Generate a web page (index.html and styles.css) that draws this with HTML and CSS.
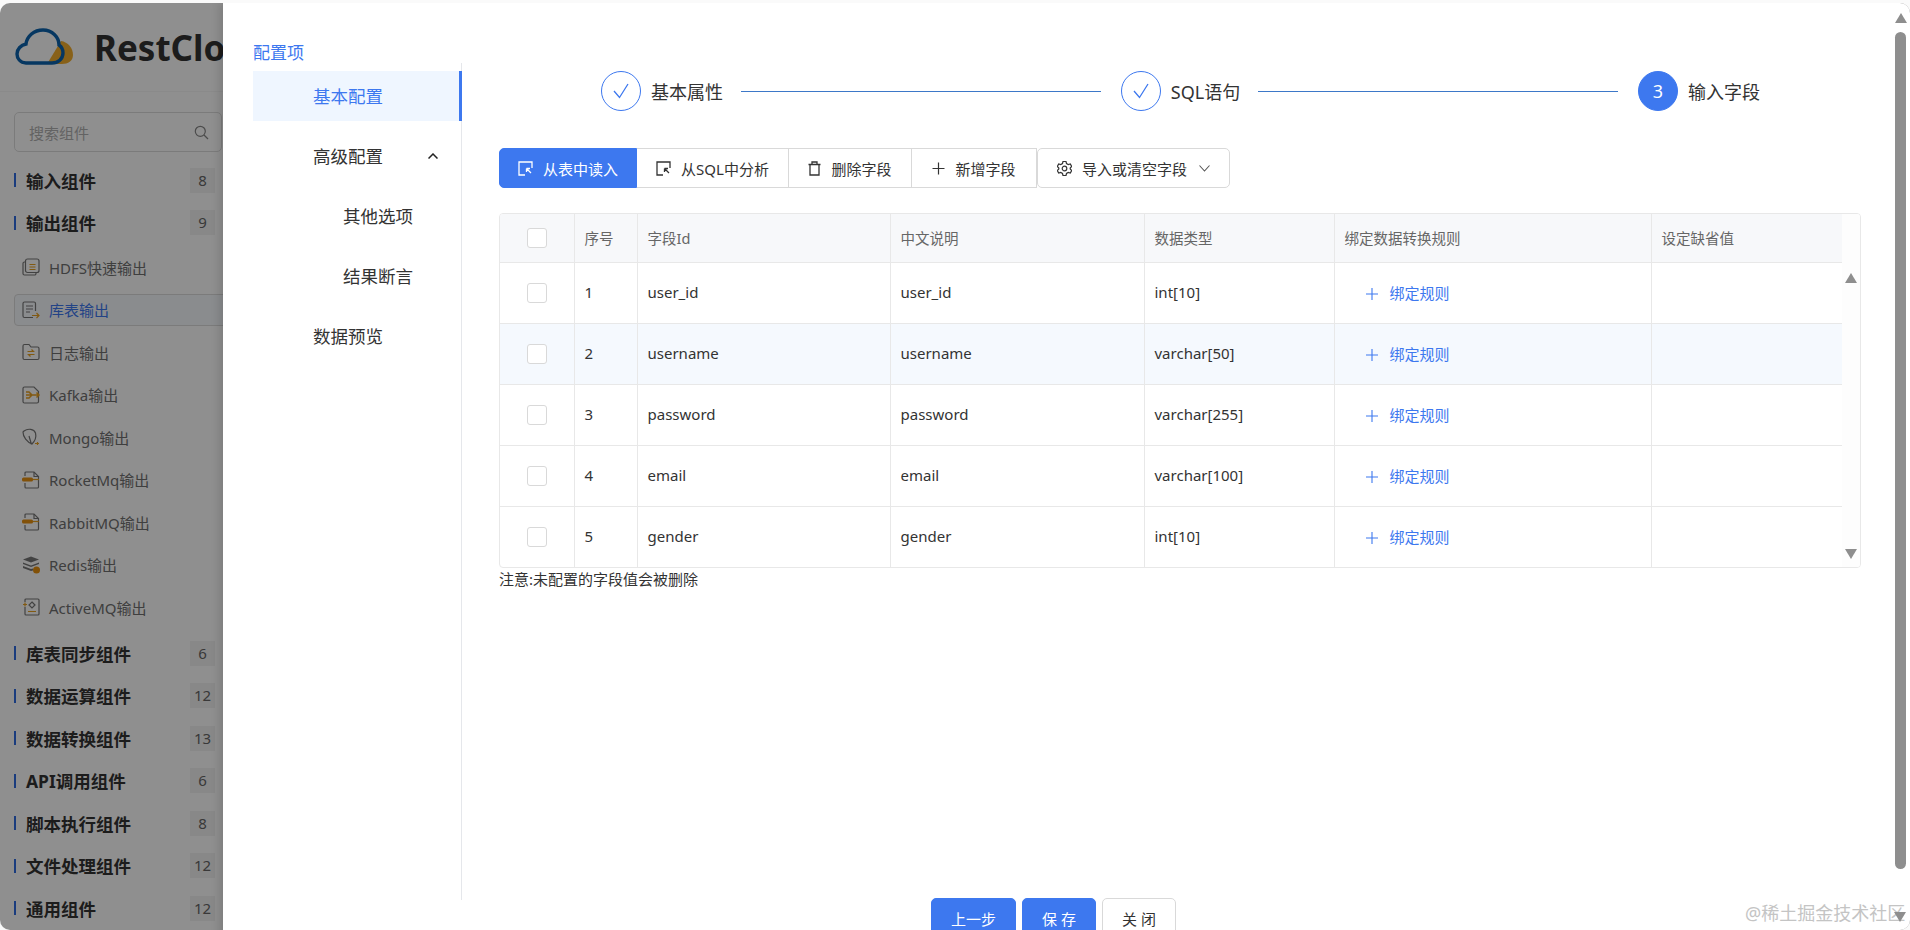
FILE: index.html
```html
<!DOCTYPE html>
<html lang="en">
<head>
    <meta charset="UTF-8">
    <meta name="viewport" content="width=device-width, initial-scale=1.0">
    <title>RestCloud</title>
    <link rel="stylesheet" href="styles.css">
</head>
<body>

<div class="page">
    <div class="sidebar">
        <div class="logo">
            <svg class="logo-icon" width="58" height="38" viewBox="0 0 58 38">
                <path d="M32 36 L46 13 C53 14 58 20 58 27 C58 33 53 36 47 36 Z" fill="#f2ae2e"/>
                <path d="M11 35 C5 35 2 30 2 26 C2 21 6 17 11 16 C12 8 19 2 28 2 C37 2 44 9 44 17 C47 19 48 22 48 25 C48 31 43 35 37 35 Z" fill="none" stroke="#0b62ad" stroke-width="3.4"/>
            </svg>
            <span class="logo-text">RestCloud</span>
        </div>

        <div class="search">
            <span>搜索组件</span>
            <svg width="15" height="15" viewBox="0 0 15 15" fill="none" stroke="#888" stroke-width="1.2"><circle cx="6.3" cy="6.3" r="5"/><path d="M10 10l4 4"/></svg>
        </div>

        <div class="group"><span class="group-name">输入组件</span><span class="count">8</span></div>
        <div class="group"><span class="group-name">输出组件</span><span class="count">9</span></div>

        <div class="items">
            <div class="item">
                <svg width="18" height="18" viewBox="0 0 18 18" fill="none" stroke="#777" stroke-width="1.2"><rect x="3.5" y="1" width="13.5" height="13.5" rx="2"/><path d="M3.5 4H2.5A1.5 1.5 0 0 0 1 5.500V15.500A1.500 1.500 0 0 0 2.500 17H12.500A1.500 1.500 0 0 0 14 15.500V14.500"/><path d="M7.500 6.500h6M7.500 9h6M7.500 11.500h6" stroke="#e8a020"/></svg>
                <span>HDFS快速输出</span>
            </div>
            <div class="item item-active">
                <svg width="18" height="18" viewBox="0 0 18 18" fill="none" stroke="#777" stroke-width="1.2"><path d="M11 16.500H2.500A1.500 1.500 0 0 1 1 15V2.500A1.500 1.500 0 0 1 2.500 1H12A1.500 1.500 0 0 1 13.500 2.500V10"/><path d="M4 5h7M4 8h7M4 11h4"/><path d="M10 14.500h7M14.500 12l2.500 2.500-2.500 2.500" stroke="#e8a020"/></svg>
                <span>库表输出</span>
            </div>
            <div class="item">
                <svg width="18" height="18" viewBox="0 0 18 18" fill="none" stroke="#777" stroke-width="1.2"><path d="M1 3A1.500 1.500 0 0 1 2.500 1.500H7L9 4H15.500A1.500 1.500 0 0 1 17 5.500V15A1.500 1.500 0 0 1 15.500 16.500H2.500A1.500 1.500 0 0 1 1 15Z"/><path d="M5.500 8.500h6l-2-2M12.500 11.500h-6l2 2" stroke="#e8a020"/></svg>
                <span>日志输出</span>
            </div>
            <div class="item">
                <svg width="18" height="18" viewBox="0 0 18 18" fill="none" stroke="#777" stroke-width="1.2"><path d="M1 2.500A1.500 1.500 0 0 1 2.500 1H12L16.500 5.500V15.500A1.500 1.500 0 0 1 15 17H2.500A1.500 1.500 0 0 1 1 15.500Z"/><path d="M4 6h3l3 3-3 3H4M4 9h13M14.500 6.500L17 9l-2.500 2.500" stroke="#e8a020" stroke-width="1.500"/></svg>
                <span>Kafka输出</span>
            </div>
            <div class="item">
                <svg width="18" height="18" viewBox="0 0 18 18" fill="none" stroke="#777" stroke-width="1.2"><path d="M2 3C6 0 12 1 13.500 5C14.500 9 13 13 10 16C5 14 1 9 1 4ZM9.500 16.500L7 8"/><path d="M13 15.500h4M15.500 14v3" stroke="#e8a020"/></svg>
                <span>Mongo输出</span>
            </div>
            <div class="item">
                <svg width="18" height="18" viewBox="0 0 18 18" fill="none" stroke="#777" stroke-width="1.2"><path d="M3 5V2A1 1 0 0 1 4 1H12L16.500 5.500V16A1 1 0 0 1 15.500 17H4A1 1 0 0 1 3 16V12"/><path d="M12 1V5.500H16.500"/><rect x="0" y="6.500" width="11" height="4" rx="1.500" fill="#e8900f" stroke="none"/><path d="M11 8.500h6" stroke="#e8a020"/></svg>
                <span>RocketMq输出</span>
            </div>
            <div class="item">
                <svg width="18" height="18" viewBox="0 0 18 18" fill="none" stroke="#777" stroke-width="1.2"><path d="M3 5V2A1 1 0 0 1 4 1H12L16.500 5.500V16A1 1 0 0 1 15.500 17H4A1 1 0 0 1 3 16V12"/><path d="M12 1V5.500H16.500"/><rect x="0" y="6.500" width="11" height="4" rx="1.500" fill="#e8900f" stroke="none"/><path d="M11 8.500h6" stroke="#e8a020"/></svg>
                <span>RabbitMQ输出</span>
            </div>
            <div class="item">
                <svg width="18" height="18" viewBox="0 0 18 18" fill="#777" stroke="none"><path d="M9 0.500L17 3.500 9 6.500 1 3.500Z"/><path d="M1 6.500L9 9.500 17 6.500V8L9 11 1 8Z"/><path d="M1 10L9 13 11 12.500V14.500L9 15 1 12Z"/><circle cx="14.500" cy="14" r="3.500" fill="#e8900f"/></svg>
                <span>Redis输出</span>
            </div>
            <div class="item">
                <svg width="18" height="18" viewBox="0 0 18 18" fill="none" stroke="#777" stroke-width="1.2"><path d="M3 4V2A1 1 0 0 1 4 1H16A1 1 0 0 1 17 2V16A1 1 0 0 1 16 17H4A1 1 0 0 1 3 16V9"/><path d="M10 4L13 7 10 10 7 7Z"/><path d="M6 13.500h8M1 6.500h4M3 4.500v4" stroke="#e8a020"/></svg>
                <span>ActiveMQ输出</span>
            </div>
        </div>

        <div class="group"><span class="group-name">库表同步组件</span><span class="count">6</span></div>
        <div class="group"><span class="group-name">数据运算组件</span><span class="count">12</span></div>
        <div class="group"><span class="group-name">数据转换组件</span><span class="count">13</span></div>
        <div class="group"><span class="group-name">API调用组件</span><span class="count">6</span></div>
        <div class="group"><span class="group-name">脚本执行组件</span><span class="count">8</span></div>
        <div class="group"><span class="group-name">文件处理组件</span><span class="count">12</span></div>
        <div class="group"><span class="group-name">通用组件</span><span class="count">12</span></div>
    </div>
    <div class="mask"></div>

    <div class="drawer">
        <div class="drawer-body">
            <div class="side">
                <div class="side-title">配置项</div>
                <ul class="menu">
                    <li class="menu-item active">基本配置</li>
                    <li class="menu-item">高级配置
                        <svg class="chevron-up" width="10" height="6" viewBox="0 0 10 6" fill="none" stroke="#222" stroke-width="1.500"><path d="M0.500 5.500L5 1l4.500 4.500"/></svg>
                    </li>
                    <li class="menu-item sub">其他选项</li>
                    <li class="menu-item sub">结果断言</li>
                    <li class="menu-item">数据预览</li>
                </ul>
            </div>

            <div class="main">
                <div class="steps">
                    <span class="circle">
                        <svg width="38" height="38" viewBox="0 0 38 38" fill="none" stroke="#3d78ef" stroke-width="1.300"><path d="M12 19l5.500 6.500L26 12"/></svg>
                    </span>
                    <span class="step-label">基本属性</span>
                    <span class="step-line"></span>
                    <span class="circle">
                        <svg width="38" height="38" viewBox="0 0 38 38" fill="none" stroke="#3d78ef" stroke-width="1.300"><path d="M12 19l5.500 6.500L26 12"/></svg>
                    </span>
                    <span class="step-label">SQL语句</span>
                    <span class="step-line"></span>
                    <span class="circle current">3</span>
                    <span class="step-label">输入字段</span>
                </div>

                <div class="toolbar">
                    <button class="tool-btn primary">
                        <svg width="15" height="15" viewBox="0 0 15 15" fill="none" stroke="#fff" stroke-width="1.300"><path d="M14 7V1H1V14H7"/><path d="M8.500 7.500L13 12M8.500 7.500h3.500M8.500 7.500V11"/></svg>
                        从表中读入
                    </button>
                    <button class="tool-btn">
                        <svg width="15" height="15" viewBox="0 0 15 15" fill="none" stroke="#333" stroke-width="1.300"><path d="M14 7V1H1V14H7"/><path d="M8.500 7.500L13 12M8.500 7.500h3.500M8.500 7.500V11"/></svg>
                        从SQL中分析
                    </button>
                    <button class="tool-btn">
                        <svg width="13" height="15" viewBox="0 0 13 15" fill="none" stroke="#333" stroke-width="1.300"><path d="M0.500 3.500h12M4 3.500V1h5v2.500M2 3.500V14h9V3.500"/></svg>
                        删除字段
                    </button>
                    <button class="tool-btn">
                        <svg width="13" height="13" viewBox="0 0 13 13" fill="none" stroke="#333" stroke-width="1.200"><path d="M6.500 0.500v12M0.500 6.500h12"/></svg>
                        新增字段
                    </button>
                    <button class="tool-btn last">
                        <svg width="15" height="15" viewBox="0 0 15 15" fill="none" stroke="#333" stroke-width="1.200"><path d="M6 1h3l0.500 2 1.800 1 2-0.600 1.400 2.600-1.500 1.500v1l1.500 1.500-1.400 2.600-2-0.600-1.800 1-0.500 2H6l-0.500-2-1.800-1-2 0.600L0.300 10l1.500-1.500v-1L0.300 6l1.400-2.600 2 0.600 1.800-1Z" transform="translate(0 -0.500)"/><circle cx="7.500" cy="7.500" r="2.300"/></svg>
                        导入或清空字段
                        <svg class="chevron" width="11" height="7" viewBox="0 0 11 7" fill="none" stroke="#555" stroke-width="1.100"><path d="M0.500 0.500L5.500 6l5-5.500"/></svg>
                    </button>
                </div>

                <div class="table-box">
                    <table class="field-table">
                        <colgroup>
                            <col class="col-check"><col class="col-no"><col class="col-id"><col class="col-cn">
                            <col class="col-type"><col class="col-rule"><col class="col-default">
                        </colgroup>
                        <thead>
                            <tr>
                                <th class="check"><span class="checkbox"></span></th>
                                <th>序号</th><th>字段Id</th><th>中文说明</th><th>数据类型</th><th>绑定数据转换规则</th><th>设定缺省值</th>
                            </tr>
                        </thead>
                        <tbody>
                            <tr>
                                <td class="check"><span class="checkbox"></span></td>
                                <td>1</td><td>user_id</td><td>user_id</td><td>int[10]</td>
                                <td class="rule"><svg width="12" height="12" viewBox="0 0 12 12" fill="none" stroke="#3d78ef" stroke-width="1.100"><path d="M6 0v12M0 6h12"/></svg>绑定规则</td>
                                <td></td>
                            </tr>
                            <tr class="hover">
                                <td class="check"><span class="checkbox"></span></td>
                                <td>2</td><td>username</td><td>username</td><td>varchar[50]</td>
                                <td class="rule"><svg width="12" height="12" viewBox="0 0 12 12" fill="none" stroke="#3d78ef" stroke-width="1.100"><path d="M6 0v12M0 6h12"/></svg>绑定规则</td>
                                <td></td>
                            </tr>
                            <tr>
                                <td class="check"><span class="checkbox"></span></td>
                                <td>3</td><td>password</td><td>password</td><td>varchar[255]</td>
                                <td class="rule"><svg width="12" height="12" viewBox="0 0 12 12" fill="none" stroke="#3d78ef" stroke-width="1.100"><path d="M6 0v12M0 6h12"/></svg>绑定规则</td>
                                <td></td>
                            </tr>
                            <tr>
                                <td class="check"><span class="checkbox"></span></td>
                                <td>4</td><td>email</td><td>email</td><td>varchar[100]</td>
                                <td class="rule"><svg width="12" height="12" viewBox="0 0 12 12" fill="none" stroke="#3d78ef" stroke-width="1.100"><path d="M6 0v12M0 6h12"/></svg>绑定规则</td>
                                <td></td>
                            </tr>
                            <tr>
                                <td class="check"><span class="checkbox"></span></td>
                                <td>5</td><td>gender</td><td>gender</td><td>int[10]</td>
                                <td class="rule"><svg width="12" height="12" viewBox="0 0 12 12" fill="none" stroke="#3d78ef" stroke-width="1.100"><path d="M6 0v12M0 6h12"/></svg>绑定规则</td>
                                <td></td>
                            </tr>
                        </tbody>
                    </table>
                    <div class="table-scroll">
                        <span class="arrow-up"></span>
                        <span class="arrow-down"></span>
                    </div>
                </div>
                <div class="note">注意:未配置的字段值会被删除</div>
            </div>
        </div>

        <div class="footer">
            <button class="foot-btn blue wide">上一步</button>
            <button class="foot-btn blue">保 存</button>
            <button class="foot-btn">关 闭</button>
        </div>
    </div>

    <div class="page-scroll">
        <span class="arrow-up"></span>
        <span class="thumb"></span>
    </div>
    <div class="watermark">@稀土掘金技术社区</div>
    <span class="arrow-down page-down"></span>
</div>

</body>
</html>
```

FILE: styles.css
```css
html, body {
    margin: 0;
    padding: 0;
    height: 100%;
    overflow: hidden;
    background: #fafafa;
}

body {
    font-family: "Noto Sans", "Noto Sans CJK SC", sans-serif;
    font-size: 15px;
    color: #333;
}

.page {
    position: relative;
    height: 927px;
    margin-top: 3px;
    border-radius: 10px;
    overflow: hidden;
    background: #fff;
}

/* page behind the drawer */
.sidebar {
    width: 223px;
    height: 100%;
    overflow: hidden;
    background: #fff;
}

.logo {
    display: flex;
    align-items: center;
    height: 88px;
    padding-left: 15px;
    border-bottom: 1px solid #f6f6f6;
    white-space: nowrap;
}

.logo-icon {
    flex: none;
    margin: -1px 21px 0 0;
}

.logo-text {
    font-size: 35px;
    font-weight: 700;
    color: #333;
}

.search {
    box-sizing: border-box;
    display: flex;
    align-items: center;
    justify-content: space-between;
    width: 208px;
    height: 40px;
    margin: 20px 0 7px 14px;
    padding: 0 12px 0 14px;
    border: 1px solid #dcdcdc;
    border-radius: 5px;
    color: #b0b0b0;
}

.group {
    display: flex;
    align-items: center;
    justify-content: space-between;
    box-sizing: border-box;
    width: 201px;
    height: 42.5px;
    margin-left: 14px;
}

.group-name {
    position: relative;
    padding-left: 12px;
    font-size: 17.5px;
    font-weight: 700;
    color: #333;
}

.group-name::before {
    content: "";
    position: absolute;
    left: 0;
    top: 50%;
    width: 2px;
    height: 14px;
    margin-top: -7px;
    background: #2f6ce0;
}

.count {
    width: 25px;
    height: 25px;
    line-height: 25px;
    text-align: center;
    font-size: 15px;
    background: #f2f2f2;
    color: #666;
}

.items {
    display: flex;
    flex-direction: column;
    gap: 10.5px;
    padding: 7.25px 0 8.75px;
}

.item {
    box-sizing: border-box;
    display: flex;
    align-items: center;
    gap: 9px;
    width: 240px;
    height: 32px;
    margin-left: 14px;
    padding-left: 7px;
    border: 1px solid transparent;
    border-radius: 4px;
    color: #707070;
    white-space: nowrap;
}

.item svg {
    flex: none;
}

.item-active {
    border-color: #dcdcdc;
    background: #f7f9fe;
    color: #3d78ef;
}

.mask {
    position: absolute;
    inset: 0;
    background: rgba(0, 0, 0, 0.44);
}

/* drawer */
.drawer {
    position: absolute;
    left: 223px;
    top: 0;
    right: 0;
    height: 967px;
    display: flex;
    flex-direction: column;
    background: #fff;
    box-shadow: -4px 0 8px rgba(0, 0, 0, 0.12);
}

.drawer-body {
    flex: none;
    display: flex;
    height: 895px;
}

.side {
    flex: none;
    width: 239px;
    height: 897px;
    padding-left: 30px;
    box-sizing: border-box;
    display: flex;
    flex-direction: column;
}

.side-title {
    margin-top: 40px;
    height: 20px;
    line-height: 20px;
    font-size: 17px;
    color: #3d78ef;
}

.menu {
    flex: 1;
    list-style: none;
    margin: 0;
    padding: 8px 0 0;
    border-right: 1px solid #e5e7eb;
}

.menu-item {
    position: relative;
    box-sizing: border-box;
    height: 50px;
    line-height: 50px;
    margin: 0 -1px 10px 0;
    padding-left: 60px;
    font-size: 17.5px;
    color: #333;
}

.menu-item.sub {
    padding-left: 90px;
}

.menu-item.active {
    background: #eff6ff;
    color: #3d78ef;
    border-right: 3px solid #3d78ef;
}

.chevron-up {
    position: absolute;
    left: 175px;
    top: 22px;
}

.main {
    flex: none;
    width: 1401px;
    box-sizing: border-box;
    padding: 68px 0 0 37px;
}

.steps {
    display: flex;
    align-items: center;
    width: 1159px;
    height: 40px;
    margin-left: 102px;
}

.circle {
    flex: none;
    box-sizing: border-box;
    display: flex;
    align-items: center;
    justify-content: center;
    width: 40px;
    height: 40px;
    border: 1px solid #3d78ef;
    border-radius: 50%;
    font-size: 18px;
}

.circle.current {
    background: #3d78ef;
    color: #fff;
}

.step-label {
    flex: none;
    margin-left: 10px;
    font-size: 18px;
    color: #333;
}

.step-line {
    flex: 1;
    height: 1px;
    margin: 0 20px 0 18px;
    background: #3d78c8;
}

.toolbar {
    display: flex;
    margin-top: 37px;
}

.tool-btn {
    box-sizing: border-box;
    display: flex;
    align-items: center;
    justify-content: center;
    gap: 10px;
    width: 123px;
    height: 40px;
    padding: 0;
    border: 1px solid #d9d9d9;
    border-left: 0;
    background: #fff;
    font-family: inherit;
    font-size: 15px;
    color: #333;
    white-space: nowrap;
}

.tool-btn:nth-child(1) { width: 138px; }
.tool-btn:nth-child(2) { width: 152px; }
.tool-btn:nth-child(4) { width: 125px; }
.tool-btn:nth-child(5) { width: 193px; }

.tool-btn.primary {
    border: 1px solid #3d78ef;
    border-radius: 5px 0 0 5px;
    background: #3d78ef;
    color: #fff;
}

.tool-btn.last {
    border-left: 1px solid #d9d9d9;
    border-radius: 5px;
}

.chevron {
    margin-left: 2px;
}

.table-box {
    display: flex;
    box-sizing: border-box;
    width: 1362px;
    margin-top: 25px;
    border: 1px solid #e8e8e8;
    border-radius: 4px;
    overflow: hidden;
}

.field-table {
    flex: none;
    width: 1342px;
    table-layout: fixed;
    border-collapse: collapse;
}

.col-check { width: 74px; }
.col-no { width: 63px; }
.col-id { width: 253px; }
.col-cn { width: 254px; }
.col-type { width: 190px; }
.col-rule { width: 317px; }
.col-default { width: 191px; }

.field-table th,
.field-table td {
    padding: 0 0 2px 10px;
    border-right: 1px solid #e8e8e8;
    border-bottom: 1px solid #e8e8e8;
    text-align: left;
}

.field-table th {
    height: 46px;
    background: #f7f8fa;
    font-weight: 400;
    font-size: 14.5px;
    color: #666;
}

.field-table td {
    height: 58px;
}

.field-table tr > :last-child {
    border-right: 0;
}

.field-table tbody tr:last-child td {
    border-bottom: 0;
}

.field-table .check {
    padding: 0 0 2px;
    text-align: center;
}

.field-table tr.hover td {
    background: #f5f9fe;
}

.checkbox {
    display: inline-block;
    box-sizing: border-box;
    width: 20px;
    height: 20px;
    vertical-align: middle;
    border: 1px solid #d9d9d9;
    border-radius: 3px;
    background: #fff;
}

.field-table .rule {
    padding-left: 31px;
    color: #3d78ef;
    font-size: 15px;
}

.rule svg {
    margin-right: 12px;
    vertical-align: -1px;
}

.table-scroll {
    flex: 1;
    display: flex;
    flex-direction: column;
    justify-content: space-between;
    align-items: center;
    padding: 59px 0 8px;
    background: #fdfdfd;
}

.arrow-up,
.arrow-down {
    display: block;
    width: 0;
    height: 0;
    border-left: 6px solid transparent;
    border-right: 6px solid transparent;
}

.arrow-up {
    border-bottom: 10px solid #8e8e8e;
}

.arrow-down {
    border-top: 10px solid #8e8e8e;
}

.note {
    margin-top: 1px;
    line-height: 20px;
    font-size: 15px;
    color: #333;
}

.footer {
    flex: none;
    display: flex;
    gap: 6px;
    padding-left: 708px;
}

.foot-btn {
    box-sizing: border-box;
    width: 74px;
    height: 40px;
    border: 1px solid #d9d9d9;
    border-radius: 5px;
    background: #fff;
    font-family: inherit;
    font-size: 15px;
    color: #333;
}

.foot-btn.blue {
    border-color: #3d78ef;
    background: #3d78ef;
    color: #fff;
}

.foot-btn.wide {
    width: 85px;
}

/* window scrollbar and site watermark, on top of everything */
.page-scroll {
    position: absolute;
    left: 1895px;
    top: 0;
    width: 11px;
    display: flex;
    flex-direction: column;
    align-items: center;
    padding-top: 10px;
}

.thumb {
    display: block;
    width: 11px;
    height: 837px;
    margin-top: 9px;
    border-radius: 6px;
    background: #8e8e8e;
}

.page-down {
    position: absolute;
    left: 1894px;
    top: 909px;
}

.watermark {
    position: absolute;
    left: 1745px;
    top: 897px;
    line-height: 26px;
    font-size: 18px;
    color: #c4c4c4;
    white-space: nowrap;
}
```
